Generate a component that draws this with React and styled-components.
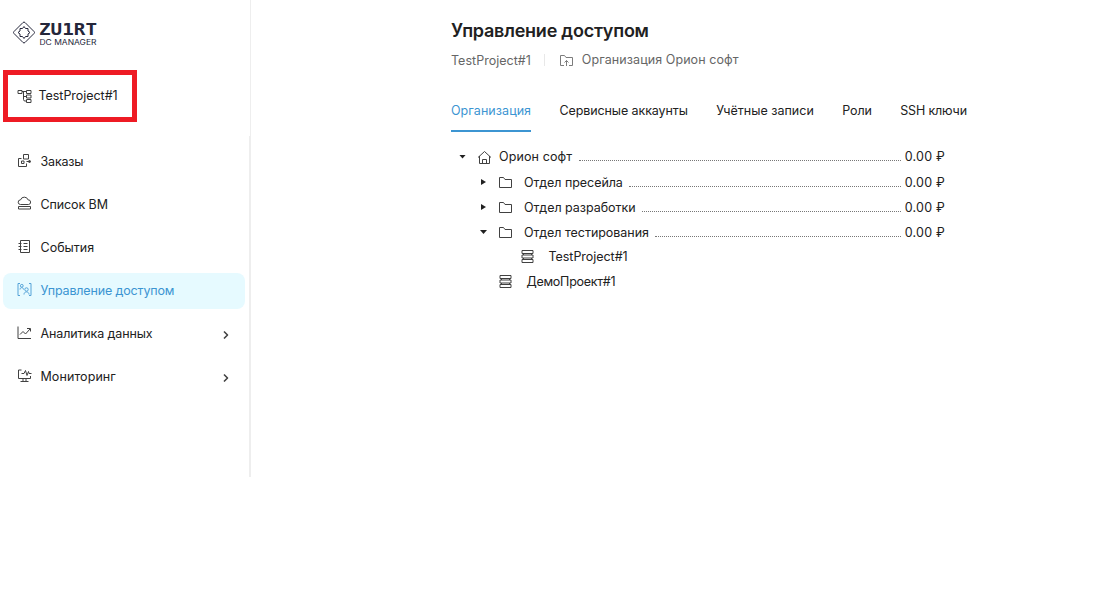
import React from 'react';
import styled, { createGlobalStyle } from 'styled-components';

const GlobalStyle = createGlobalStyle`
    *{ box-sizing:border-box; }

    body{
        margin:0;
        background:#ffffff;
        color:#212121;
        font-family:Inter, "Open Sans", sans-serif;
        font-size:12.5px;
        line-height:16px;
    }
`;

const Page = styled.div`
    display:flex;
    height:610px;
    overflow:hidden;
`;

const Sidebar = styled.aside`
    display:flex;
    flex-direction:column;
    width:251px;
    height:477px;
`;

const SidebarTop = styled.div`
    height:136px;
    border-right:1px solid #eeeeee;
`;

const Logo = styled.svg`
    display:block;
    width:100px;
    height:30px;
    margin:18px 0 0 10px;
`;

const ProjectBox = styled.div`
    display:flex;
    align-items:center;
    width:134px;
    height:52px;
    margin:22px 0 0 3px;
    padding:0 0 1px 9px;
    border:5px solid #ee1b24;

    svg{
        margin-top:2px;
    }
`;

const Menu = styled.nav`
    display:flex;
    flex-direction:column;
    gap:7.2px;
    flex:1;
    padding:7.5px 4px 0 3px;
    border-right:2px solid #eeeeee;
`;

const MenuItem = styled.a`
    display:flex;
    align-items:center;
    height:36px;
    padding:0 14px 0 13.5px;
    border-radius:8px;
    color:${p => p.$active ? '#3c95d2' : '#212121'};
    background:${p => p.$active ? '#e6faff' : 'transparent'};

    svg{
        margin-top:-3px;
    }
    svg:last-child{
        margin:2px 0 0 auto;
    }
`;

const Icon = styled.svg`
    flex:none;
    width:${p => p.$size || 15}px;
    height:${p => p.$size || 15}px;
    fill:none;
    stroke:currentColor;
    stroke-width:${p => p.$stroke || 1};
    stroke-linejoin:round;
    opacity:0.85;
`;

const Text = styled.span`
    white-space:nowrap;
    letter-spacing:${p => p.$track || 0}px;
    margin-left:${p => p.$left || 0}px;
`;

const Main = styled.main`
    display:flex;
    flex-direction:column;
    width:520px;
    margin-left:200px;
    padding-top:20px;
`;

const Title = styled.h1`
    margin:0;
    font-size:18px;
    line-height:22px;
    font-weight:600;
    letter-spacing:-0.23px;
`;

const Crumbs = styled.div`
    display:flex;
    align-items:center;
    height:20px;
    margin-top:8px;
    color:#666666;

    span:first-child{
        padding-top:2px;
    }
`;

const Divider = styled.i`
    width:1px;
    height:12px;
    margin:0 14px 0 13px;
    background:#e8e8e8;
`;

const Tabs = styled.div`
    display:flex;
    gap:28.3px;
    height:30px;
    margin-top:32px;
`;

const Tab = styled.div`
    height:30px;
    padding-top:1px;
    white-space:nowrap;
    letter-spacing:${p => p.$track}px;
    color:${p => p.$active ? '#3c95d2' : '#212121'};
    border-bottom:2px solid ${p => p.$active ? '#3c95d2' : 'transparent'};
`;

const Tree = styled.div`
    display:flex;
    flex-direction:column;
    width:494px;
    padding-top:12px;
`;

const Row = styled.div`
    display:flex;
    align-items:center;
    height:${p => p.$height}px;
    padding-left:${p => p.$indent}px;
`;

const Projects = styled.div`
    margin-top:-1px;
`;

const Caret = styled.i`
    flex:none;
    width:${p => p.$open ? 7 : 5}px;
    height:${p => p.$open ? 4 : 6}px;
    margin:-1px ${p => p.$open ? 11 : 12}px 0 ${p => p.$open ? 0 : 1}px;
    background:#212121;
    clip-path:${p => p.$open ? 'polygon(0 0, 100% 0, 50% 100%)' : 'polygon(0 0, 100% 50%, 0 100%)'};
`;

const Leader = styled.span`
    flex:1;
    align-self:flex-start;
    height:8px;
    margin:9px 4px 0 6.5px;
    border-bottom:1px dotted #777777;
`;

const icons = {
    project: <path d="M1 1.500h4v3H1zM9.500 1.500h4.500v3H9.500zM9.500 6h4.500v3H9.500zM9.500 10.500h4.500v3H9.500zM5 2.500h4.500M6.500 2.500v8q0 1.500 1.500 1.500h1.500M6.500 7.500h3" />,
    orders: (
        <>
            <path d="M4.500 5.500h-3v8h8v-3M6.500 1.500h5v4.500h-5zM4.500 8h2.500v2.500H4.500zM9.500 8.500H12" />
            <circle cx="12.500" cy="8.500" r="1" fill="currentColor" />
        </>
    ),
    cloud: <path d="M3.500 8.500a2.300 2.300 0 0 1 0-4.600 4 4 0 0 1 7.600 0 2.300 2.300 0 0 1 .4 4.600zM1.500 10.500h12v2.500h-12z" />,
    events: <path d="M3.500 1.500h9v12h-9zM1.500 4.500h3M1.500 7.500h3M1.500 10.500h3M6.500 4.500h4M6.500 7.500h4M6.500 10.500h4" />,
    access: (
        <>
            <path d="M3 1.500H1v12h2M12 1.500h2v12h-2M3 7.500c0-2.500 3.500-2.500 3.500 0M7 12.500c0-3.500 5-3.500 5 0" />
            <circle cx="4.800" cy="3.800" r="1.400" />
            <circle cx="9.500" cy="7.500" r="1.700" />
        </>
    ),
    chart: <path d="M1 1.500v12h13M3 9.500l3-3 2.500 2.500 4.500-5M10 3.500h3.500v3" />,
    monitor: <path d="M4.500 2H1.500v8.500h12V8M6 10.500v2.500M9 10.500v2.500M3.500 13.500h8M4.500 5.500h2.500L8.500 2.500l1.500 5 1.500-4 .5 2h2.500" />,
};

const menu = [
    { text: 'Заказы', icon: 'orders', track: -0.17 },
    { text: 'Список ВМ', icon: 'cloud', track: -0.1 },
    { text: 'События', icon: 'events', track: 0.02 },
    { text: 'Управление доступом', icon: 'access', track: -0.15, active: true },
    { text: 'Аналитика данных', icon: 'chart', track: -0.13, more: true },
    { text: 'Мониторинг', icon: 'monitor', track: 0.08, more: true },
];

const tabs = [
    { text: 'Организация', track: 0.06, active: true },
    { text: 'Сервисные аккаунты', track: -0.09 },
    { text: 'Учётные записи', track: 0.02 },
    { text: 'Роли', track: -0.05 },
    { text: 'SSH ключи', track: -0.16 },
];

const departments = [
    { text: 'Отдел пресейла', track: -0.05 },
    { text: 'Отдел разработки', track: -0.03 },
    { text: 'Отдел тестирования', track: -0.04, open: true },
];

function ServerIcon() {
    return (
        <Icon viewBox="0 0 15 15">
            <path d="M2 1.500h11v3H2zM2 6h11v3H2zM2 10.500h11v3H2zM3.500 4.500V6M11.500 4.500V6M3.500 9v1.500M11.500 9v1.500" />
        </Icon>
    );
}

export default function App() {
    return (
        <Page>
            <GlobalStyle />
            <Sidebar>
                <SidebarTop>
                    <Logo viewBox="0 0 100 30">
                        <g fill="none" stroke="#24263a" strokeWidth="1" strokeLinejoin="round">
                            <path d="M13 4.500q1-1 2 0l9 9q1 1 0 2l-9 9q-1 1-2 0l-9-9q-1-1 0-2z" />
                            <path d="M14 8.500l1.500 2h2.500v2.500l2 1.500-2 1.500v2.500h-2.500l-1.500 2-1.500-2H10V16l-2-1.500 2-1.500v-2.500h2.500z" />
                        </g>
                        <text x="29" y="16.500" textLength="58" lengthAdjust="spacingAndGlyphs" fontFamily="DejaVu Sans Mono" fontSize="16.500" fontWeight="700" fill="#24263a">ZU1RT</text>
                        <text x="29.500" y="26.500" textLength="57" lengthAdjust="spacingAndGlyphs" fontSize="7.200" fill="#24263a">DC MANAGER</text>
                    </Logo>
                    <ProjectBox>
                        <Icon viewBox="0 0 15 15">{icons.project}</Icon>
                        <Text $left={6.5} $track={-0.04}>TestProject#1</Text>
                    </ProjectBox>
                </SidebarTop>
                <Menu>
                    {menu.map(item => (
                        <MenuItem key={item.text} $active={item.active}>
                            <Icon viewBox="0 0 15 15">{icons[item.icon]}</Icon>
                            <Text $left={9} $track={item.track}>{item.text}</Text>
                            {item.more && (
                                <Icon viewBox="0 0 10 10" $size={10} $stroke={1.6}>
                                    <path d="M3 1.500L6.500 5 3 8.500" />
                                </Icon>
                            )}
                        </MenuItem>
                    ))}
                </Menu>
            </Sidebar>
            <Main>
                <Title>Управление доступом</Title>
                <Crumbs>
                    <Text $track={0.02}>TestProject#1</Text>
                    <Divider />
                    <Icon viewBox="0 0 15 15">
                        <path d="M5 12.500H1.500v-10h4l1.500 2h6.500v8H10M7.500 13V7.500M5.500 9.500l2-2 2 2" />
                    </Icon>
                    <Text $left={8} $track={0.08}>Организация Орион софт</Text>
                </Crumbs>
                <Tabs>
                    {tabs.map(tab => (
                        <Tab key={tab.text} $active={tab.active} $track={tab.track}>{tab.text}</Tab>
                    ))}
                </Tabs>
                <Tree>
                    <Row $height={26} $indent={8}>
                        <Caret $open />
                        <Icon viewBox="0 0 15 15">
                            <path d="M1 7.500l6.500-6 6.500 6M2.500 6v7.500h10V6M5.500 13.500v-4h4v4" />
                        </Icon>
                        <Text $left={7} $track={0.12}>Орион софт</Text>
                        <Leader />
                        <Text $track={0.22}>0.00 ₽</Text>
                    </Row>
                    {departments.map(d => (
                        <Row key={d.text} $height={25} $indent={29}>
                            <Caret $open={d.open} />
                            <Icon viewBox="0 0 15 15">
                                <path d="M1.500 2.500h4l1.500 2h6.500v8h-12z" />
                            </Icon>
                            <Text $left={11} $track={d.track}>{d.text}</Text>
                            <Leader />
                            <Text $track={0.22}>0.00 ₽</Text>
                        </Row>
                    ))}
                    <Projects>
                        <Row $height={25} $indent={69}>
                            <ServerIcon />
                            <Text $left={13.5} $track={-0.04}>TestProject#1</Text>
                        </Row>
                        <Row $height={25} $indent={47}>
                            <ServerIcon />
                            <Text $left={13.5} $track={-0.26}>ДемоПроект#1</Text>
                        </Row>
                    </Projects>
                </Tree>
            </Main>
        </Page>
    );
}
